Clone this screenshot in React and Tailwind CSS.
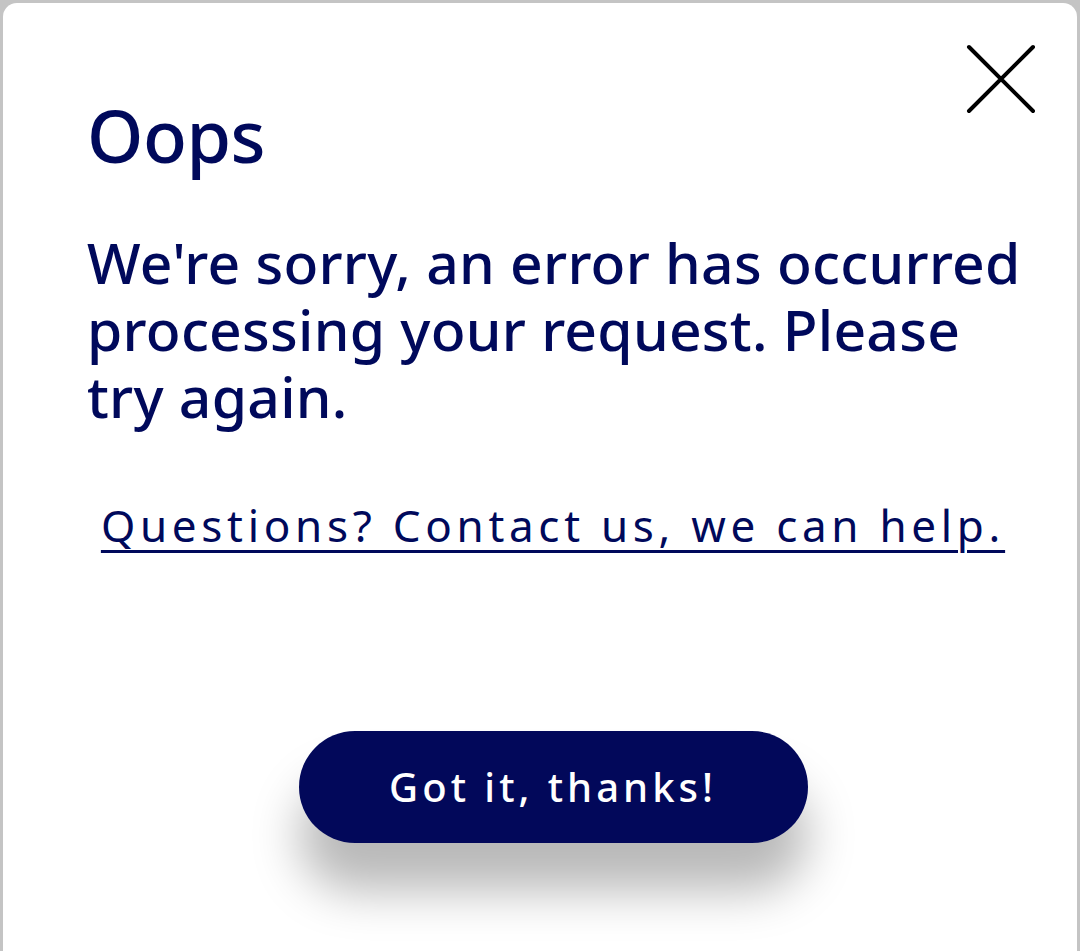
export default function App() {
  const font = { fontFamily: '"Noto Sans", "Open Sans", sans-serif' };
  return (
    <div className="w-[1080px] h-[951px] bg-[#c4c4c4] pt-[3px] px-[3px] overflow-hidden" style={font}>
      <div className="relative h-full bg-white rounded-t-[14px] pl-[84px] pr-[58px] flex flex-col">
        <button className="absolute right-[40px] top-[40px] w-[72px] h-[72px] flex items-center justify-center">
          <svg width="72" height="72" viewBox="0 0 72 72" fill="none">
            <path d="M4 4 L68 68 M68 4 L4 68" stroke="#000" strokeWidth="4" strokeLinecap="round" />
          </svg>
        </button>
        <h1 className="mt-[96px] text-[72px] leading-none font-medium text-[#00095b] tracking-[-0.5px]">Oops</h1>
        <p className="mt-[58px] text-[57px] leading-[67px] font-medium text-[#00095b] tracking-[0.25px] whitespace-nowrap">
          We're sorry, an error has occurred<br />processing your request. Please<br />try again.
        </p>
        <div className="mt-[73px] flex justify-center">
          <a href="#" className="text-[44px] leading-none text-[#00095b] underline decoration-[3px] underline-offset-[8px] tracking-[4.7px] whitespace-nowrap">
            Questions? Contact us, we can help.
          </a>
        </div>
        <div className="mt-[184px] flex justify-center">
          <button className="w-[509px] h-[112px] rounded-full bg-[#02085a] text-white text-[40px] font-medium tracking-[4px] shadow-[0_48px_48px_rgba(0,0,0,0.28)]">
            Got it, thanks!
          </button>
        </div>
      </div>
    </div>
  );
}
